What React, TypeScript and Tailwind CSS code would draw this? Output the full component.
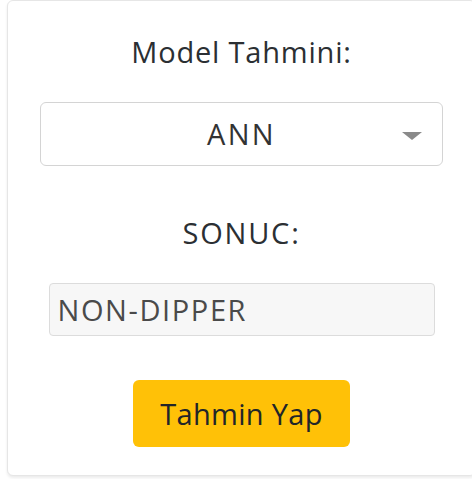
import { useState } from "react";

const MODELS = ["ANN", "SVM", "Random Forest", "KNN"];

export default function App() {
  const [model, setModel] = useState("ANN");
  const [result] = useState("NON-DIPPER");

  return (
    <div
      className="w-[472px] h-[479px] overflow-hidden bg-white text-[#2b2f33]"
      style={{ fontFamily: '"Open Sans", "Noto Sans", sans-serif' }}
    >
      <div className="ml-[7px] w-[469px] h-[476px] rounded-md border border-[#e6e6e6] bg-white shadow-[0_2px_3px_rgba(0,0,0,0.08)] flex flex-col items-center pt-[33px]">
        <label className="text-[29px] leading-[36px] tracking-[0.8px]">Model Tahmini:</label>

        <div className="relative mt-[32px] w-[403px] h-[64px]">
          <select
            value={model}
            onChange={(e) => setModel(e.target.value)}
            className="appearance-none w-full h-full rounded-md border border-[#d4d4d4] bg-white text-center text-[29px] tracking-[2.4px] text-[#333] outline-none"
          >
            {MODELS.map((m) => (
              <option key={m} value={m}>
                {m}
              </option>
            ))}
          </select>
          <svg
            className="pointer-events-none absolute right-[21px] top-[30px]"
            width="20"
            height="8"
            viewBox="0 0 20 8"
          >
            <path d="M0 0 L20 0 L10 8 Z" fill="#8a8a8a" />
          </svg>
        </div>

        <label className="mt-[49px] text-[29px] leading-[36px] tracking-[1.8px]">SONUC:</label>

        <input
          readOnly
          value={result}
          className="mt-[32px] w-[386px] h-[53px] rounded-sm border border-[#dcdcdc] bg-[#f7f7f7] px-[8px] text-[29px] tracking-[1.6px] text-[#4a4a4a] outline-none"
        />

        <button className="mt-[44px] w-[217px] h-[67px] rounded-md bg-[#ffc107] text-[29px] tracking-[0.3px] text-[#212529]">
          Tahmin Yap
        </button>
      </div>
    </div>
  );
}
